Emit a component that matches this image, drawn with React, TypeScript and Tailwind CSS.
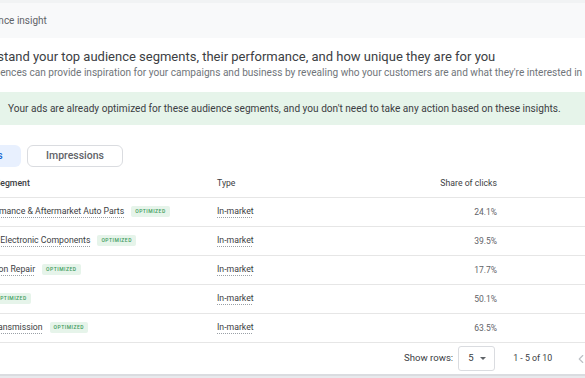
import { ChevronLeft } from "lucide-react"

const rows = [
  { name: "Performance & Aftermarket Auto Parts", share: "24.1%" },
  { name: "Motor Electronic Components", share: "39.5%" },
  { name: "Collision Repair", share: "17.7%" },
  { name: "Oil", share: "50.1%" },
  { name: "Car Transmission", share: "63.5%" },
]

function Badge() {
  return (
    <span className="ml-[7px] inline-flex h-[11px] items-center rounded-[2px] bg-[#e6f4ea] px-[4px] text-[5px] font-medium uppercase tracking-[0.5px] text-[#3c9a5a]">
      Optimized
    </span>
  )
}

export default function App() {
  return (
    <div
      className="h-[378px] w-[585px] overflow-hidden bg-[#e8eaed]"
      style={{ fontFamily: "Roboto, 'Liberation Sans', sans-serif" }}
    >
      <div className="ml-[-48px] w-[700px] bg-white">
        <div className="h-[3px] bg-[#f1f3f4]" />
        <div className="flex h-[35px] items-center bg-[#f8f9fa] pl-[21px] text-[10px] text-[#5f6368]">
          Audience insight
        </div>

        <div className="pl-[11px] pt-[10px]">
          <div className="text-[13px] leading-[17px] text-[#3c4043]">
            Understand your top audience segments, their performance, and how unique they are for you
          </div>
          <div className="-ml-[5px] whitespace-nowrap text-[10.1px] leading-[16px] text-[#70757a]">
            Your audiences can provide inspiration for your campaigns and business by revealing who your customers are and what they're interested in
          </div>
        </div>

        <div className="mt-[11px] flex h-[33px] items-center whitespace-nowrap bg-[#e6f4ea] pl-[56px] text-[10.1px] text-[#3c4043]">
          Your ads are already optimized for these audience segments, and you don't need to take any action based on these insights.
        </div>

        <div className="mt-[20px] flex gap-[6px] pl-[4px]">
          <button className="h-[22px] w-[65px] rounded-[6px] bg-[#e8f0fe] text-[10.5px] font-medium text-[#1967d2]">
            Clicks
          </button>
          <button className="h-[22px] w-[96px] rounded-[6px] border border-[#dadce0] text-[10.5px] font-medium text-[#5f6368]">
            Impressions
          </button>
        </div>

        <div className="mt-[3px] grid h-[28px] grid-cols-[265px_148px_132px] items-center border-b border-[#e6e6e6] text-[8.7px] text-[#3c4043]">
          <div className="pl-[43px] font-medium">Segment</div>
          <div>Type</div>
          <div className="text-right">Share of clicks</div>
        </div>

        {rows.map((r) => (
          <div
            key={r.name}
            className="grid h-[29px] grid-cols-[265px_148px_132px] items-center border-b border-[#e6e6e6] text-[8.7px] text-[#3c4043]"
          >
            <div className="flex items-center whitespace-nowrap pl-[23px]">
              <span className="underline decoration-[#9aa0a6] decoration-dotted underline-offset-[3px]">
                {r.name}
              </span>
              <Badge />
            </div>
            <div>
              <span className="underline decoration-[#9aa0a6] decoration-dotted underline-offset-[3px]">
                In-market
              </span>
            </div>
            <div className="text-right text-[8.5px] text-[#5f6368]">{r.share}</div>
          </div>
        ))}

        <div className="flex h-[33px] items-center border-b-2 border-[#dadce0] pl-[452px] text-[#3c4043]">
          <span className="text-[9.6px]">Show rows:</span>
          <div className="ml-[5px] flex h-[25px] w-[37px] items-center rounded-[3px] border border-[#dadce0] pl-[9px] text-[9.6px]">
            <span>5</span>
            <span className="ml-[6px] h-0 w-0 border-x-[3.5px] border-t-[3.5px] border-x-transparent border-t-[#5f6368]" />
          </div>
          <span className="ml-[18px] text-[8.8px]">1 - 5 of 10</span>
          <ChevronLeft className="ml-[22px] h-[14px] w-[14px] text-[#bdc1c6]" />
        </div>
      </div>
    </div>
  )
}
